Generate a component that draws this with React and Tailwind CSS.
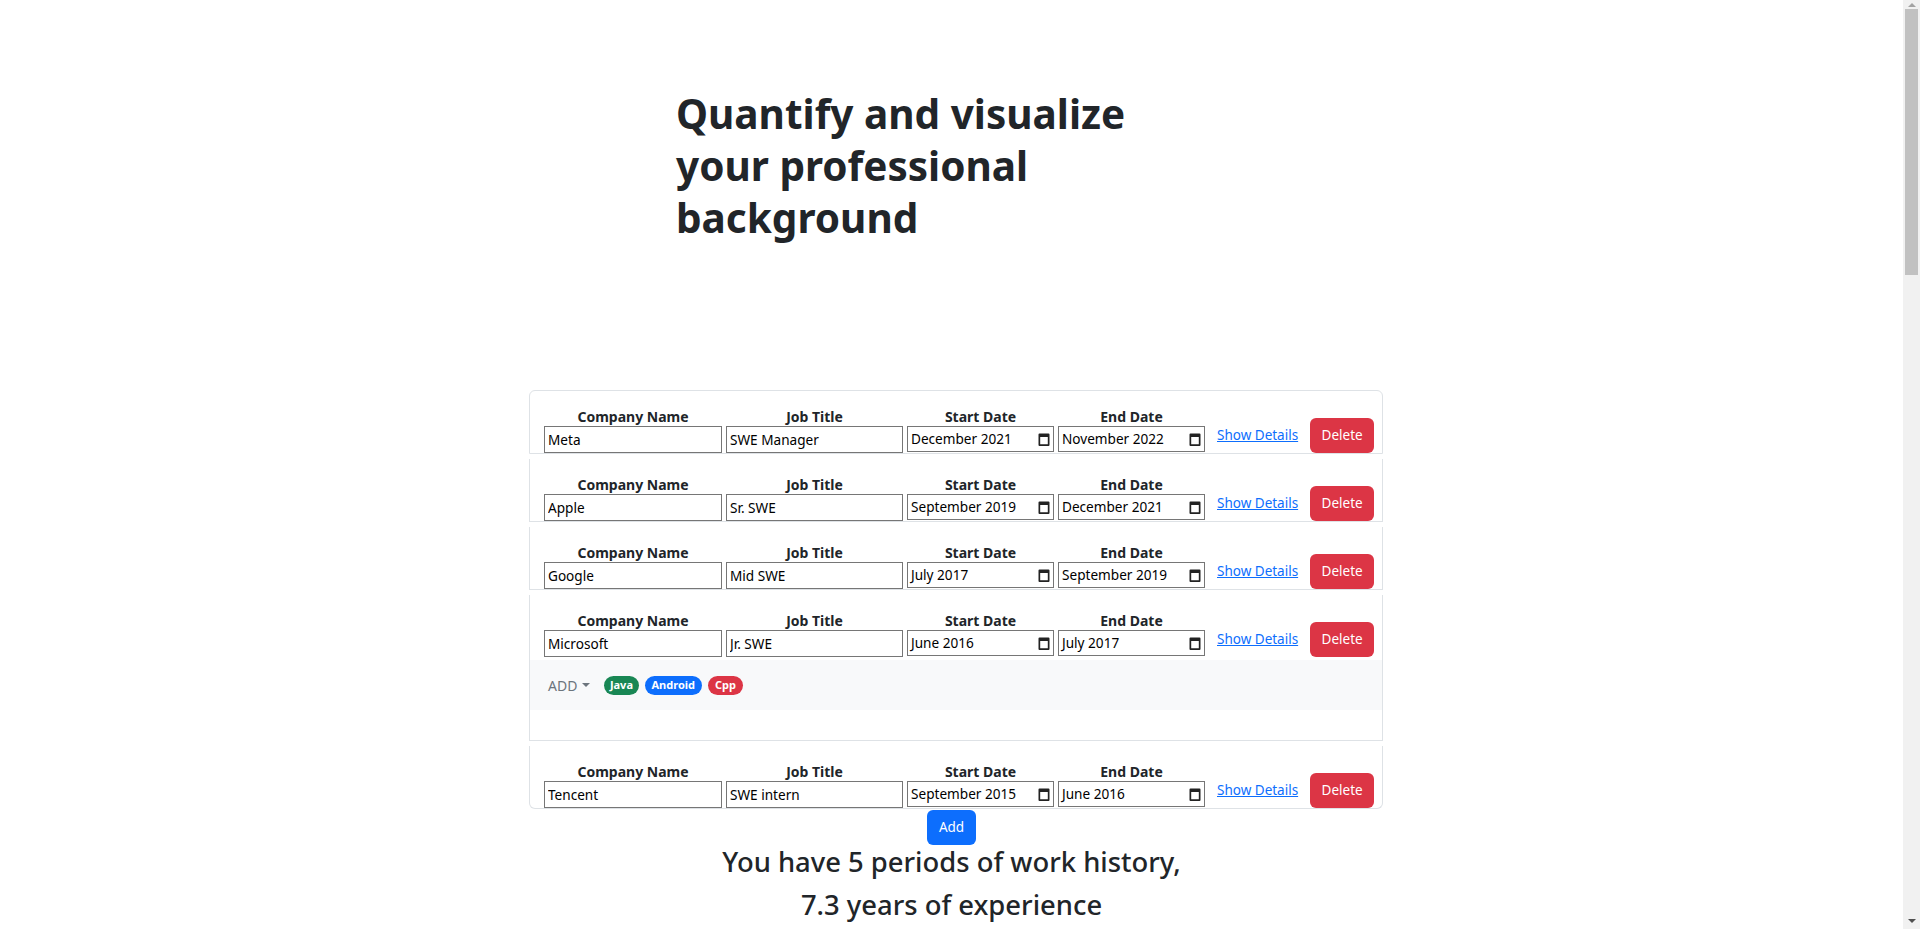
import React from 'react';
import clsx from 'clsx';

const jobs = [
  { company: 'Meta', title: 'SWE Manager', start: 'December 2021', end: 'November 2022' },
  { company: 'Apple', title: 'Sr. SWE', start: 'September 2019', end: 'December 2021' },
  { company: 'Google', title: 'Mid SWE', start: 'July 2017', end: 'September 2019' },
  { company: 'Microsoft', title: 'Jr. SWE', start: 'June 2016', end: 'July 2017', skills: true },
  { company: 'Tencent', title: 'SWE intern', start: 'September 2015', end: 'June 2016' },
];

const skills = [
  { name: 'Java', color: 'bg-[#198754] px-[5.5px]' },
  { name: 'Android', color: 'bg-[#0d6efd] px-[7px]' },
  { name: 'Cpp', color: 'bg-[#dc3545] px-[7px]' },
];

function CalendarIcon() {
  return (
    <svg width="12" height="13" viewBox="0 0 12 13" className="shrink-0">
      <path
        fillRule="evenodd"
        fill="#222"
        d="M1.5 0.5h9a1 1 0 0 1 1 1v10.5a1 1 0 0 1 -1 1h-9a1 1 0 0 1 -1 -1v-10.5a1 1 0 0 1 1 -1z M2.2 4v7.3h7.6v-7.3z"
      />
    </svg>
  );
}

function Field({ label, width, children }) {
  return (
    <div className={clsx('flex flex-col', width)}>
      <div className="h-[19px] text-center text-[14px] font-bold leading-[19px] text-[#212529]">{label}</div>
      {children}
    </div>
  );
}

function MonthBox({ value }) {
  return (
    <div className="mb-px flex h-[26px] w-full items-center justify-between border border-[#767676] pl-[3px] pr-[3px] text-[13.6px] text-black">
      <span>{value}</span>
      <CalendarIcon />
    </div>
  );
}

function JobRow({ job, first, last }) {
  return (
    <div
      className={clsx(
        'border-x border-b border-[#dee2e6] bg-white',
        first ? 'rounded-t-[6px] border-t' : 'mt-[5px]',
        last && 'rounded-b-[6px]'
      )}
    >
      <div className="flex items-end pl-[14px] pt-[16px]">
        <Field label="Company Name" width="w-[178px]">
          <input
            type="text"
            defaultValue={job.company}
            className="h-[27px] w-full border border-[#767676] px-[3px] text-[13.6px] text-black outline-none"
          />
        </Field>
        <Field label="Job Title" width="ml-[4px] w-[177px]">
          <input
            type="text"
            defaultValue={job.title}
            className="h-[27px] w-full border border-[#767676] px-[3px] text-[13.6px] text-black outline-none"
          />
        </Field>
        <Field label="Start Date" width="ml-[4px] w-[147px]">
          <MonthBox value={job.start} />
        </Field>
        <Field label="End Date" width="ml-[4px] w-[147px]">
          <MonthBox value={job.end} />
        </Field>
        <div className="ml-[12px] flex h-[35px] items-center gap-[12px]">
          <a href="#" className="text-[13.5px] text-[#0d6efd] underline">Show Details</a>
          <button className="h-[35px] w-[64px] rounded-[6px] bg-[#dc3545] text-[13.5px] text-white">Delete</button>
        </div>
      </div>
      {job.skills && (
        <div className="pb-[30px]">
          <div className="mt-[3px] flex h-[50px] items-center bg-[#f8f9fa] pl-[18px]">
            <button className="flex items-center text-[14px] text-[#6c757d]">
              ADD
              <span className="ml-[5px] h-0 w-0 border-x-[4px] border-t-[4px] border-x-transparent border-t-[#6c757d]" />
            </button>
            <div className="ml-[14px] flex items-center gap-[6px]">
              {skills.map((s) => (
                <span
                  key={s.name}
                  className={clsx('flex h-[19px] items-center rounded-full text-[11px] font-bold text-white', s.color)}
                >
                  {s.name}
                </span>
              ))}
            </div>
          </div>
        </div>
      )}
    </div>
  );
}

function Scrollbar() {
  return (
    <aside className="sticky top-0 flex h-screen w-[17px] shrink-0 flex-col items-center bg-[#f1f1f1]">
      <span className="mt-[3px] h-0 w-0 border-x-[4px] border-b-[4px] border-x-transparent border-b-[#a3a3a3]" />
      <div className="mt-[2px] h-[266px] w-[13px] bg-[#c1c1c1]" />
      <div className="flex-1" />
      <span className="mb-[6px] h-0 w-0 border-x-[4px] border-t-[4px] border-x-transparent border-t-[#505050]" />
    </aside>
  );
}

export default function App() {
  return (
    <div className="flex bg-white font-['Noto_Sans',sans-serif] text-[#212529]">
      <main className="w-[1903px] shrink-0">
        <div className="pt-[88px]">
          <h1 className="ml-[676px] w-[500px] text-[40.5px] font-bold leading-[52px]">
            Quantify and visualize your professional background
          </h1>
        </div>

        <div className="mt-[146px] ml-[529px] w-[854px]">
          {jobs.map((job, i) => (
            <JobRow key={job.company} job={job} first={i === 0} last={i === jobs.length - 1} />
          ))}
        </div>

        <div className="flex justify-center">
          <button className="mt-px h-[35px] w-[49px] rounded-[6px] bg-[#0d6efd] text-[13.5px] text-white">Add</button>
        </div>

        <div className="text-center">
          <h3 className="mb-[9px] text-[27.4px] font-medium leading-[34px]">You have 5 periods of work history,</h3>
          <h3 className="mb-[9px] text-[27.4px] font-medium leading-[34px]">7.3 years of experience</h3>
        </div>

        <div className="h-[2200px]" />
      </main>
      <Scrollbar />
    </div>
  );
}
